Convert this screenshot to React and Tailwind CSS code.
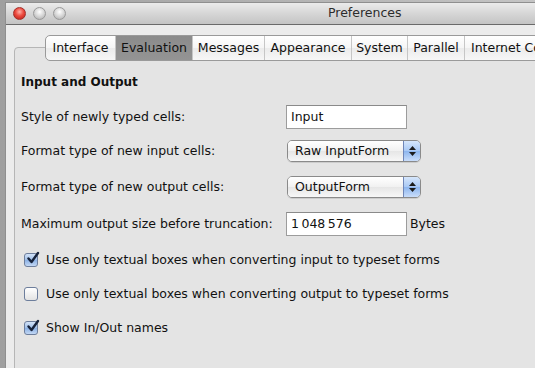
import React from "react";

const font = { fontFamily: '"DejaVu Sans", "Liberation Sans", sans-serif' };

function Light({ red }) {
  return (
    <div
      className={
        "w-[13px] h-[13px] rounded-full border " +
        (red
          ? "border-[#a3302a] bg-[radial-gradient(circle_at_50%_35%,#ffb1a8_0%,#ec4b3f_45%,#b51a14_100%)]"
          : "border-[#9a9a9a] bg-[radial-gradient(circle_at_50%_35%,#ffffff_0%,#d6d6d6_50%,#a9a9a9_100%)]")
      }
    />
  );
}

function Popup({ label }) {
  return (
    <div className="w-[134px] h-[22px] flex rounded-[5px] border border-[#8a8a8a] overflow-hidden shadow-[0_1px_0_rgba(0,0,0,0.1)]">
      <div className="flex-1 flex items-center pl-[7px] bg-[linear-gradient(#ffffff,#f1f1f1_50%,#e6e6e6_51%,#f7f7f7)] text-[12.5px] text-[#111]">
        {label}
      </div>
      <div className="w-[17px] border-l border-[#6f86b8] bg-[linear-gradient(#d6e6fb,#a8c8f4_50%,#8cb5ee_51%,#c9ddfa)] flex flex-col items-center justify-center gap-[2px]">
        <svg width="7" height="4" viewBox="0 0 7 4"><path d="M3.5 0L7 4H0z" fill="#1b1b1b" /></svg>
        <svg width="7" height="4" viewBox="0 0 7 4"><path d="M0 0H7L3.5 4z" fill="#1b1b1b" /></svg>
      </div>
    </div>
  );
}

function TextBox({ value }) {
  return (
    <div className="w-[121px] h-[24px] bg-white border border-[#9c9c9c] border-t-[#8a8a8a] flex items-center pl-[4px] text-[12.5px] text-[#111]">
      {value}
    </div>
  );
}

function Check({ checked, label }) {
  return (
    <div className="flex items-center h-[34px]">
      <div
        className="ml-[3px] w-[14px] h-[14px] rounded-[3px] border border-[#6d7e9c] relative bg-[linear-gradient(#ffffff,#e3e3e3)]"
        style={checked ? { background: "linear-gradient(#d3e3f8,#9fbfe9 50%,#8ab0e4 51%,#c3d8f4)" } : undefined}
      >
        {checked && (
          <svg className="absolute left-[1px] top-[-3px]" width="14" height="14" viewBox="0 0 14 14">
            <path d="M2.5 7.5 L5.5 11 L12 2" fill="none" stroke="#16223a" strokeWidth="2.4" strokeLinecap="round" strokeLinejoin="round" />
          </svg>
        )}
      </div>
      <span className="ml-[8px] text-[12.5px] text-[#111]">{label}</span>
    </div>
  );
}

const tabs = [
  ["Interface", "w-[69px] justify-center"],
  ["Evaluation", "w-[77px] justify-center"],
  ["Messages", "w-[72px] justify-center"],
  ["Appearance", "w-[87px] justify-center"],
  ["System", "w-[56px] justify-center"],
  ["Parallel", "w-[57px] justify-center"],
  ["Internet Connectivity", "w-[150px] pl-[6px]"],
];

function Row({ label, children, className = "" }) {
  return (
    <div className={"flex items-center text-[12.5px] text-[#111] " + className}>
      <div className="w-[265px] shrink-0">{label}</div>
      {children}
    </div>
  );
}

export default function App() {
  return (
    <div style={font} className="w-[535px] h-[368px] overflow-hidden bg-[linear-gradient(90deg,#9f9f9f,#c4c4c4)] pl-[5px] pt-[2px]">
      <div className="w-[700px] h-[400px] bg-[#ececec] border-l border-t border-[#8f8f8f] flex flex-col">
        {/* title bar */}
        <div className="h-[22px] shrink-0 flex items-center bg-[linear-gradient(#ebebeb,#d6d6d6_50%,#c4c4c4)] border-b border-[#6a6a6a]">
          <div className="flex gap-[7px] ml-[7px]">
            <Light red />
            <Light />
            <Light />
          </div>
          <div className="ml-[262px] text-[12.5px] text-[#2c2c2c]">Preferences</div>
        </div>
        {/* content */}
        <div className="relative flex-1">
          <div className="absolute left-[39px] top-[10px] h-[26px] flex rounded-l-[5px] border border-[#9a9a9a] bg-[linear-gradient(#ffffff,#f5f5f5_50%,#ebebeb_51%,#f7f7f7)] overflow-hidden z-10">
            {tabs.map(([t, w], i) => (
              <div
                key={t}
                className={
                  w +
                  " shrink-0 flex items-center text-[12.5px] text-[#111] whitespace-nowrap " +
                  (i > 0 ? "border-l border-[#c6c6c6] " : "") +
                  (t === "Evaluation" ? "bg-[linear-gradient(#8b8b8b,#949494)] border-[#7d7d7d]" : "")
                }
              >
                {t}
              </div>
            ))}
          </div>
          <div className="mt-[22px] ml-[8px] h-[400px] border border-[#b6b6b6] rounded-tl-[4px] bg-[#e4e4e4] pl-[6px] pt-[27px]">
            <div className="text-[12px] font-bold text-[#111] h-[16px] leading-[16px] -mt-[1px]">Input and Output</div>
            <Row label="Style of newly typed cells:" className="mt-[15px]">
              <TextBox value="Input" />
            </Row>
            <Row label="Format type of new input cells:" className="mt-[11px]">
              <div className="ml-[1px]"><Popup label="Raw InputForm" /></div>
            </Row>
            <Row label="Format type of new output cells:" className="mt-[14px]">
              <div className="ml-[1px]"><Popup label="OutputForm" /></div>
            </Row>
            <Row label="Maximum output size before truncation:" className="mt-[14px]">
              <TextBox value={"1\u202F048\u202F576"} />
              <div className="ml-[3px]">Bytes</div>
            </Row>
            <div className="mt-[7px]">
              <Check checked label="Use only textual boxes when converting input to typeset forms" />
              <Check label="Use only textual boxes when converting output to typeset forms" />
              <Check checked label="Show In/Out names" />
            </div>
          </div>
        </div>
      </div>
    </div>
  );
}
